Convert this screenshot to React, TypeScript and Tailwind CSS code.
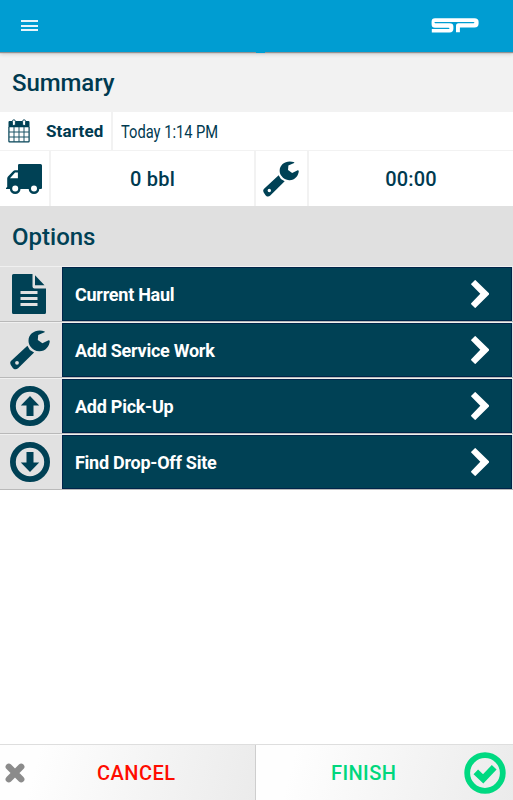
import React from "react"

const WrenchIcon: React.FC<{ className: string }> = ({ className }) => (
  <svg viewBox="0 0 40 40" className={className} fill="currentColor">
    <path d="M34.8 1.5C27-1.8 18.5 3 18.5 10.7c0 2.3.8 4.4 2.1 6.1 1.9 2.8 5.4 4.7 9 4.5 5.8-.2 10-5 10.2-10.6l-1.2-.5-6.2 3.1-4.6-3.2.4-5.1 6.4-2.7z" />
    <path
      fillRule="evenodd"
      d="M17.4 15.8 1.2 30.7C-.2 32 .1 33.6.8 35l2 3c1.3 1.8 3.8 1.7 5.3.3l16-15.8-4.2-2.6zM7 30.9a1.9 1.9 0 1 1 0 3.8 1.9 1.9 0 0 1 0-3.8z"
    />
  </svg>
)

const TruckIcon = () => (
  <svg viewBox="0 0 36 30" className="h-[30px] w-[36px]" fill="currentColor">
    <path
      fillRule="evenodd"
      d="M13.3 0H34.5Q36 0 36 1.5V24Q36 25 35 25H0V24L1.2 23V14.5Q1.2 13.4 2 12.6L7.3 7Q8 6.3 9 6.3H12V1.3Q12 0 13.3 0ZM4 14.3H11.9V8.6H9.1Z"
    />
    <circle cx="9.2" cy="24.6" r="4.2" className="fill-white stroke-[#004155]" strokeWidth="2.4" />
    <circle cx="28" cy="24.6" r="4.2" className="fill-white stroke-[#004155]" strokeWidth="2.4" />
  </svg>
)

const CalendarIcon = () => (
  <svg viewBox="0 0 22 24" className="h-6 w-[22px]">
    <path d="M.5 3Q.5 2 1.5 2H20.5Q21.5 2 21.5 3V8.3H.5Z" fill="#004155" />
    <path
      d="M.9 8V22.3Q.9 22.9 1.5 22.9H20.5Q21.1 22.9 21.1 22.3V8"
      stroke="#004155"
      strokeWidth="1.2"
      fill="none"
    />
    <path d="M6 8V23M11 8V23M16 8V23M1 13H21M1 18H21" stroke="#1c5567" strokeWidth="1" fill="none" />
    <rect x="4.4" y=".8" width="3" height="5.8" rx="1.5" fill="#fff" stroke="#004155" strokeWidth=".9" />
    <rect x="14.6" y=".8" width="3" height="5.8" rx="1.5" fill="#fff" stroke="#004155" strokeWidth=".9" />
  </svg>
)

const FileIcon = () => (
  <svg viewBox="0 0 34 40" className="h-10 w-[34px]">
    <path d="M1.5 0H20.5V12.5Q20.5 14.5 22.5 14.5H34V38.5Q34 40 32.5 40H1.5Q0 40 0 38.5V1.5Q0 0 1.5 0Z" fill="#004155" />
    <path d="M23 1.3 32.5 11.3H23Z" fill="#004155" />
    <path d="M8.5 18.5H25.5M8.5 24.5H25.5M8.5 30.5H25.5" stroke="#e1e1e1" strokeWidth="2.8" />
  </svg>
)

const ArrowIcon: React.FC<{ down?: boolean }> = ({ down }) => (
  <svg viewBox="0 0 40 40" className={down ? "size-10 rotate-180" : "size-10"}>
    <circle cx="20" cy="20" r="17.1" fill="none" stroke="#004155" strokeWidth="5.8" />
    <path d="M20 10 29.2 19.5H23.5V30H16.5V19.5H10.8Z" fill="#004155" />
  </svg>
)

const ChevronIcon = () => (
  <svg viewBox="0 0 18 28" className="h-7 w-[18px]">
    <path d="M0 4 3.8 .2Q4.2-.1 4.6.2L18 13.2Q18.4 13.8 18 14.4L4.6 27.7Q4.2 28.1 3.8 27.7L.2 24.2Q-.1 23.7.2 23.3L9.3 13.8.2 4.5Z" fill="#fff" />
  </svg>
)

// two bands on the left fold into a loop, the right band closes over a stem
const LogoIcon = () => (
  <svg viewBox="0 0 48 16" className="h-4 w-12" fill="#fff">
    <path d="M4 .2H43.5Q47.6.2 47.6 3.8V5.6Q47.6 9.6 43.5 9.6H28.9V14.2H25V8Q25 5.3 27.5 5.3H42.5Q43.4 5.3 43.4 4.6 43.4 4 42.5 4H4.2Q3.4 4 3.4 4.6 3.4 5.3 4.2 5.3H18.5Q22.4 5.3 22.4 8.6V10.8Q22.4 14.4 18.5 14.4H.8V11.1H17.6Q18.4 11.1 18.4 10.4 18.4 9.8 17.6 9.8H4Q.6 9.8.6 6.3V3.6Q.6.2 4 .2Z" />
  </svg>
)

const options = [
  { label: "Current Haul", icon: <FileIcon /> },
  { label: "Add Service Work", icon: <WrenchIcon className="size-10" /> },
  { label: "Add Pick-Up", icon: <ArrowIcon /> },
  { label: "Find Drop-Off Site", icon: <ArrowIcon down /> },
]

const App: React.FC = () => {
  return (
    <div className="flex h-[800px] w-[513px] flex-col overflow-hidden bg-white font-[Roboto,sans-serif] text-[#003a50]">
      <header className="relative flex h-[52px] shrink-0 items-center justify-between bg-[#009dd2] pr-[34px] pl-[21px] shadow-[0_1px_1px_#929292,0_2px_4px_#c8c8c8]">
        <button aria-label="Menu" className="flex w-[17px] flex-col gap-[2.5px] pb-px">
          <span className="h-0.5 w-full bg-white/90" />
          <span className="h-0.5 w-full bg-white/90" />
          <span className="h-0.5 w-full bg-white/90" />
        </button>
        <span className="pb-px">
          <LogoIcon />
        </span>
        <span className="absolute top-[52px] left-[256px] h-px w-[9px] bg-[#009dd2]" />
      </header>

      <h1 className="flex h-[60px] shrink-0 items-center bg-[#f2f2f2] pt-0.5 pl-3 text-[24px] font-medium tracking-[-0.1px]">
        Summary
      </h1>

      <section className="shrink-0">
        <div className="flex h-[39px] border-b border-[#f2f2f2]">
          <div className="flex w-[113px] items-center border-r-2 border-[#f2f2f2] pl-2">
            <CalendarIcon />
            <span className="ml-4 pt-0.5 text-[17px] font-bold tracking-[0.15px]">Started</span>
          </div>
          <div className="flex items-center pl-[7.5px]">
            <span className="origin-left scale-x-[0.815] text-[18px] whitespace-nowrap">Today 1:14 PM</span>
          </div>
        </div>
        <div className="flex h-[55px] text-[20px] font-medium">
          <div className="flex w-[51px] items-center border-r-2 border-[#f2f2f2] pl-1.5 text-[#004155]">
            <TruckIcon />
          </div>
          <div className="flex w-[205px] items-center justify-center border-r-2 border-[#f2f2f2] tracking-[0.2px]">0 bbl</div>
          <div className="flex w-[53px] items-center border-r-2 border-[#f2f2f2] pl-[7px] text-[#004155]">
            <WrenchIcon className="size-9" />
          </div>
          <div className="flex flex-1 items-center justify-center tracking-[0.2px]">00:00</div>
        </div>
      </section>

      <h2 className="flex h-[60px] shrink-0 items-center bg-[#e0e0e0] pt-0.5 pl-3 text-[24px] font-medium text-[#004155]">
        Options
      </h2>

      <ul className="shrink-0">
        {options.map(({ label, icon }) => (
          <li key={label} className="flex h-14 border-t border-b border-t-[#f0f0f0] border-b-[#b9b9b9] bg-[#e1e1e1] pr-px">
            <div className="flex w-[62px] items-center pl-[10px] text-[#004155]">
              <span className={label === "Current Haul" ? "pl-0.5" : ""}>{icon}</span>
            </div>
            <button className="flex flex-1 items-center justify-between border border-[#002449] bg-[#004155] pr-[22px] pl-3 text-[18px] font-bold tracking-[-0.26px] text-white">
              {label}
              <ChevronIcon />
            </button>
          </li>
        ))}
      </ul>

      <footer className="mt-auto flex h-14 shrink-0 border-t border-[#dedede] text-[20px] font-medium">
        <button className="flex w-64 items-center border-r border-[#cecece] bg-linear-[105deg,#fefefe_15%,#ebebeb] pl-[5px] text-[#ff0c00]">
          <svg viewBox="0 0 20 20" className="size-5">
            <path d="M3.8 3.8 16.2 16.2M16.2 3.8 3.8 16.2" stroke="#8b8b8b" strokeWidth="6.4" strokeLinecap="round" />
          </svg>
          <span className="ml-[72px] tracking-[0.5px]">CANCEL</span>
        </button>
        <button className="flex flex-1 items-center justify-between bg-linear-[105deg,#fefefe_15%,#ebebeb] pr-[7px] pl-[75px] text-[#00d77d]">
          <span className="tracking-[0.4px]">FINISH</span>
          <svg viewBox="0 0 42 42" className="h-[42px] w-[42px]">
            <circle cx="21" cy="21" r="17.8" fill="none" stroke="#00d981" strokeWidth="5.8" />
            <path d="M11.8 19.8 19.2 26.8 30.2 15.2" fill="none" stroke="#00d981" strokeWidth="6.6" />
          </svg>
        </button>
      </footer>
    </div>
  )
}

export default App
